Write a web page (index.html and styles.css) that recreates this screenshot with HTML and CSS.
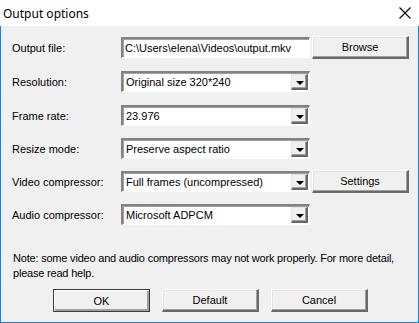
FILE: index.html
```html
<!DOCTYPE html>
<html lang="en">
<head>
    <meta charset="UTF-8">
    <title>Output options</title>
    <link rel="stylesheet" href="styles.css">
</head>
<body>
    <div class="window">
        <div class="titlebar">
            <span class="title">Output options</span>
            <svg class="close" width="12" height="12" viewBox="0 0 12 12">
                <path d="M0.5 0.5 L11.5 11.5 M11.5 0.5 L0.5 11.5" stroke="#000" stroke-width="1.1" fill="none"/>
            </svg>
        </div>

        <div class="content">
            <div class="row r1">
                <label class="lbl">Output file:</label>
                <div class="field edit">C:\Users\elena\Videos\output.mkv</div>
                <button class="btn side">Browse</button>
            </div>
            <div class="row r2">
                <label class="lbl">Resolution:</label>
                <div class="field combo"><span class="val">Original size 320*240</span><span class="arrow"></span></div>
            </div>
            <div class="row r3">
                <label class="lbl">Frame rate:</label>
                <div class="field combo"><span class="val">23.976</span><span class="arrow"></span></div>
            </div>
            <div class="row r4">
                <label class="lbl">Resize mode:</label>
                <div class="field combo"><span class="val">Preserve aspect ratio</span><span class="arrow"></span></div>
            </div>
            <div class="row r5">
                <label class="lbl">Video compressor:</label>
                <div class="field combo"><span class="val">Full frames (uncompressed)</span><span class="arrow"></span></div>
                <button class="btn side">Settings</button>
            </div>
            <div class="row r6">
                <label class="lbl">Audio compressor:</label>
                <div class="field combo"><span class="val">Microsoft ADPCM</span><span class="arrow"></span></div>
            </div>

            <p class="note">Note: some video and audio compressors may not work properly. For more detail, please read help.</p>

            <div class="buttons">
                <button class="btn default">OK</button>
                <button class="btn">Default</button>
                <button class="btn">Cancel</button>
            </div>
        </div>
    </div>
</body>
</html>
```

FILE: styles.css
```css
body {
  margin: 0;
  background: #f0f0f0;
  font-family: "Liberation Sans", Arial, sans-serif;
  font-size: 11px;
  color: #000;
}

.window {
  width: 417px;
  height: 322px;
  border: 1px solid #1883d7;
  border-top: none;
  background: #f0f0f0;
}

.titlebar {
  height: 26px;
  background: #fff;
  display: flex;
  align-items: center;
  justify-content: space-between;
  padding: 0 7px 0 3px;
  margin-left: -1px;
  margin-right: -1px;
}

.title {
  font-family: "Noto Sans", "Open Sans", sans-serif;
  font-size: 12px;
  padding-top: 1px;
}

.close {
  margin-right: 1px;
}

.content {
  padding: 11px 0 0 11px;
}

.row {
  display: flex;
  align-items: center;
  height: 21px;
  margin-bottom: 13px;
}
.row.r3, .row.r4, .row.r5 {
  margin-bottom: 12px;
}

.lbl {
  width: 109px;
  padding-top: 1px;
}

.field {
  width: 189px;
  height: 21px;
  box-sizing: border-box;
  background: #fff;
  border-style: solid;
  border-width: 2px 1px 1px 2px;
  border-color: #828282 #fff #fff #828282;
  box-shadow: inset 1px 1px 0 #a0a0a0;
  display: flex;
  align-items: center;
  padding-left: 2px;
  white-space: nowrap;
  overflow: hidden;
}

.combo {
  justify-content: space-between;
  padding-right: 1px;
}

.val {
  padding-left: 1px;
}

.arrow {
  width: 17px;
  height: 16px;
  box-sizing: border-box;
  background: #f0f0f0;
  border-style: solid;
  border-width: 1px 2px 2px 1px;
  border-color: #e3e3e3 #696969 #696969 #e3e3e3;
  box-shadow: inset -1px -1px 0 #a0a0a0;
  position: relative;
  flex-shrink: 0;
}
.arrow::after {
  content: "";
  position: absolute;
  left: 4px;
  top: 6px;
  border-left: 4px solid transparent;
  border-right: 4px solid transparent;
  border-top: 4px solid #000;
}

.btn {
  font-family: "Liberation Sans", Arial, sans-serif;
  font-size: 11px;
  color: #000;
  background: #f0f0f0;
  width: 97px;
  height: 23px;
  padding: 0;
  border-style: solid;
  border-width: 1px 2px 2px 1px;
  border-color: #fff #696969 #696969 #fff;
  box-shadow: inset -1px -1px 0 #a0a0a0, inset 1px 1px 0 #e3e3e3;
}

.btn.side {
  margin-left: 2px;
}

.btn.default {
  border: 1px solid #3c3c3c;
  box-shadow: inset 1px 1px 0 #fff, inset -2px -2px 0 #a0a0a0;
}

.note {
  margin: 26px 0 0 1px;
  line-height: 15px;
  width: 400px;
  letter-spacing: -0.2px;
}

.buttons {
  display: flex;
  gap: 12px;
  margin: 8px 0 0 41px;
}
```
